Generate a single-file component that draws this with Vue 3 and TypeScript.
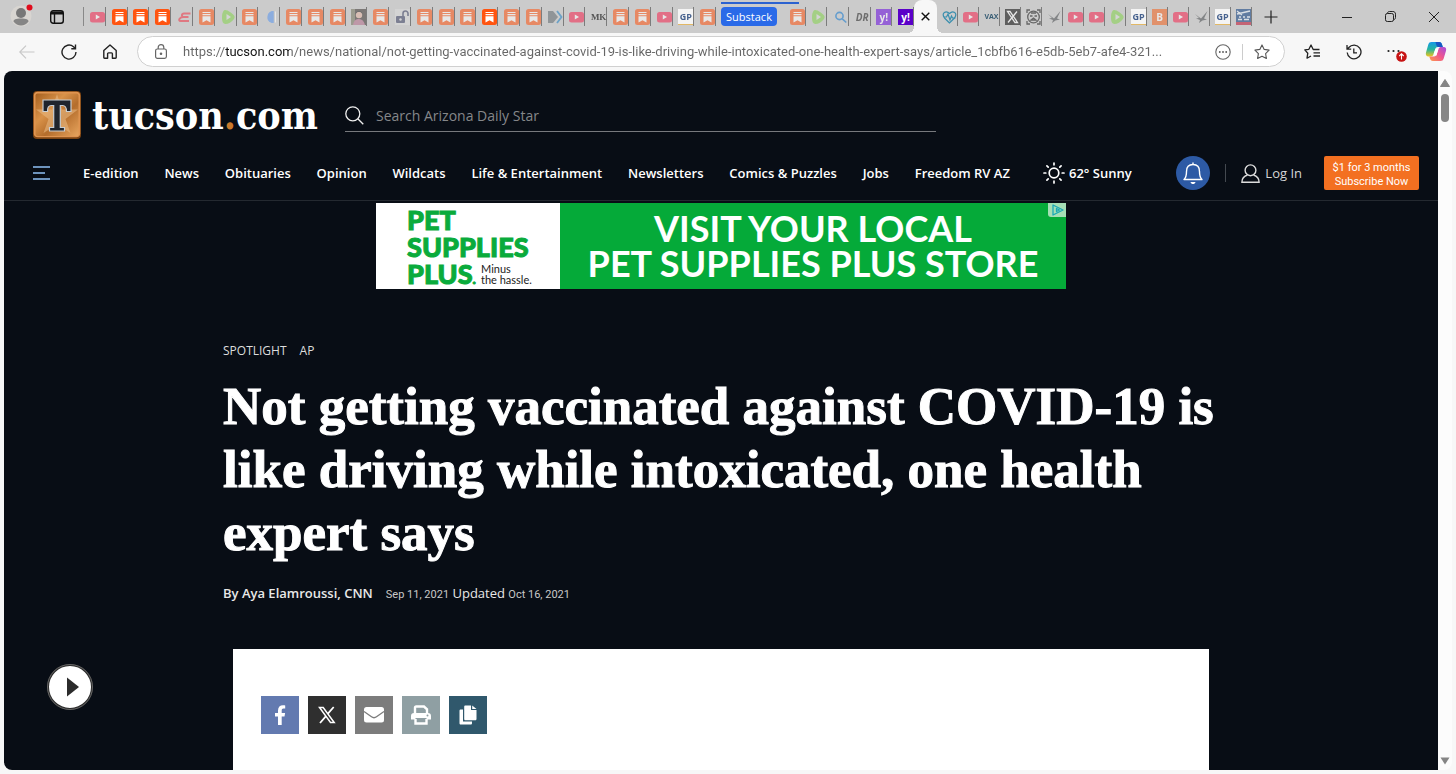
<script setup lang="ts">
import { ref } from 'vue'

interface Tab {
  icon: string
  bright?: boolean
}
interface Segment {
  type: 'group' | 'label' | 'active'
  name: string
  tabs: Tab[]
}

const toTabs = (list: string): Tab[] =>
  list.split(' ').map((item) => ({ icon: item.replace('!', ''), bright: item.endsWith('!') }))

const segments: Segment[] = [
  {
    type: 'group',
    name: 'first',
    tabs: toTabs(
      'play sub! sub! sub! e sub rumble sub moon sub sub sub photo sub lock sub sub sub sub! sub sub arrow play mk sub sub play gp sub',
    ),
  },
  { type: 'label', name: 'Substack', tabs: [] },
  { type: 'group', name: 'second', tabs: toTabs('sub rumble search dr yahoo yahoo!') },
  { type: 'active', name: 'active', tabs: [] },
  {
    type: 'group',
    name: 'third',
    tabs: toTabs('heart! play vax x face! bird play play rumble gp b play bird gp fox'),
  },
]

const glyphText: Record<string, string> = { mk: 'MK', gp: 'GP', dr: 'DR', yahoo: 'y!', vax: 'VAX', b: 'B' }

const address = ref(
  'https://tucson.com/news/national/not-getting-vaccinated-against-covid-19-is-like-driving-while-intoxicated-one-health-expert-says/article_1cbfb616-e5db-5eb7-afe4-321...',
)
const query = ref('')

const sections = [
  'E-edition',
  'News',
  'Obituaries',
  'Opinion',
  'Wildcats',
  'Life & Entertainment',
  'Newsletters',
  'Comics & Puzzles',
  'Jobs',
  'Freedom RV AZ',
]
</script>

<template>
  <div class="browser">
    <div class="tabbar">
      <button class="plain profile" aria-label="Profile">
        <svg width="24" height="24" viewBox="0 0 24 24">
          <circle cx="11" cy="13" r="10.5" fill="#d8d5d1" />
          <circle cx="11" cy="10" r="5" fill="#777" />
          <path d="M3.5 18.5c0-2 2-3 7.5-3s7.500 1 7.500 3c-2 2.600-4.500 4-7.500 4s-5.500-1.400-7.500-4z" fill="#858585" />
          <circle cx="19.500" cy="4.500" r="3" fill="#e00b1c" />
        </svg>
      </button>
      <button class="plain workspace" aria-label="Tab actions">
        <svg width="14" height="14" viewBox="0 0 14 14" fill="none" stroke="#111" stroke-width="1.4">
          <rect x="0.7" y="0.7" width="12.600" height="12.600" rx="2.500" />
          <path d="M1 2.200h12M1 3.800h12M4.500 4v9" />
        </svg>
      </button>
      <div class="strip">
        <template v-for="seg in segments" :key="seg.name">
          <div v-if="seg.type === 'group'" class="group" :class="seg.name">
            <button
              v-for="(tab, i) in seg.tabs"
              :key="i"
              class="plain tab"
              :class="{ bright: tab.bright }"
              :aria-label="`Tab ${i + 1}`"
            >
              <span v-if="glyphText[tab.icon]" class="glyph" :class="tab.icon">{{ glyphText[tab.icon] }}</span>
              <svg v-else width="15" height="16" viewBox="0 0 15 16" class="fav">
                <g v-if="tab.icon === 'sub'">
                  <rect width="15" height="16" rx="2.500" fill="#ff5410" />
                  <path d="M3.500 3.500h8M3.500 5.600h8" stroke="#fff" stroke-width="1.200" />
                  <path d="M3.500 7.200h8v6.300l-4-2.300-4 2.300z" fill="#fff" />
                </g>
                <g v-else-if="tab.icon === 'play'">
                  <rect y="3" width="15" height="10.500" rx="2.500" fill="#f5254f" />
                  <path d="M5.800 5.600v5l4.200-2.500z" fill="#fff" />
                </g>
                <g v-else-if="tab.icon === 'e'" fill="none" stroke="#f03545" stroke-width="2">
                  <path d="M13.500 4.500H7C4.500 4.500 4 7.800 7 8h4.500M8 8c-6-.5-7 4-4.500 4H12" />
                </g>
                <g v-else-if="tab.icon === 'rumble'">
                  <path d="M2 3c1-3 4-2 7 0s6 4 4 7-6 5-8.500 5S1 12 1 9s0-4 1-6z" fill="#85d44c" />
                  <path d="M5.500 5v6l4.500-3z" fill="#ddd" />
                </g>
                <g v-else-if="tab.icon === 'moon'">
                  <path d="M9.500 2v12a6 6 0 0 1 0-12z" fill="#5a96ee" />
                  <path d="M4 5c1.500-2 3-3 5.500-3v12C6 14 4 12 3.500 10z" fill="#5a96ee" />
                  <path d="M11.500 2.500v11" stroke="#fff" />
                </g>
                <g v-else-if="tab.icon === 'photo'">
                  <rect width="15" height="16" fill="#3c3532" />
                  <rect width="4" height="16" fill="#77775f" />
                  <circle cx="8" cy="6" r="3.200" fill="#e4b5a2" />
                  <path d="M2 16c1-5 3-6 6-6s5 2 6 6z" fill="#b56f8c" />
                  <path d="M4.500 5c0-4 7-4 7 0l-2-2h-3z" fill="#222" />
                </g>
                <g v-else-if="tab.icon === 'lock'">
                  <rect width="15" height="16" fill="#ddd" />
                  <rect x="1" y="7" width="9" height="7" rx="1" fill="#3d4265" />
                  <path d="M8 7V4.500a2.500 2.500 0 0 1 5 0V7" fill="none" stroke="#3d4265" stroke-width="1.600" />
                  <circle cx="5.500" cy="10.500" r="1.200" fill="#ddd" />
                </g>
                <g v-else-if="tab.icon === 'arrow'">
                  <path d="M0 2h5l5 6-5 6H0z" fill="#606a70" />
                  <path d="M9 2l4.500 6L9 14" fill="none" stroke="#1f80c4" stroke-width="1.800" />
                </g>
                <g v-else-if="tab.icon === 'search'" fill="none" stroke="#1278d0" stroke-width="1.600">
                  <circle cx="6.500" cy="7" r="3.600" />
                  <path d="M9.300 9.800l4 3.700" />
                </g>
                <g v-else-if="tab.icon === 'heart'" fill="none" stroke="#3b8fae" stroke-width="1.200">
                  <path d="M7.500 14L2.500 9C-1 4 4 .8 7.500 4.500 11 .8 16 4 12.500 9z" />
                  <path d="M2 8h2.500l1.500-3 2 6 1.500-4 1 2h3" />
                </g>
                <g v-else-if="tab.icon === 'x'">
                  <rect width="15" height="16" fill="#080808" />
                  <path d="M2.500 2.500h2.500l7.500 11H10zM12 2.500L3 13.500" fill="none" stroke="#fff" stroke-width="1.300" />
                </g>
                <g v-else-if="tab.icon === 'face'" fill="none" stroke="#666" stroke-width="1.300">
                  <path d="M1 4V1h3M11 1h3v3M1 12v3h3M11 15h3v-3" />
                  <circle cx="7.500" cy="8" r="5.800" />
                  <path d="M4 7h2.500M8.500 7H11M5 11l2.500-2 2.500 2zM5 4h5" />
                </g>
                <g v-else-if="tab.icon === 'bird'" fill="#4a4d50">
                  <path d="M1 5l6 4.500L13.500 2 10 9.500l3 1-4.500 1L5 14l1-3-4-1.500 3-.5z" />
                </g>
                <g v-else>
                  <rect width="15" height="16" fill="#0b3d80" />
                  <path d="M1 5l13-3M1 2l5 4M3 8h2M7 8h2M11 8h3M2 10.500h4M8 10.500h5" stroke="#e8f0fa" stroke-width="1.300" />
                  <rect y="13" width="15" height="3" fill="#c01030" />
                </g>
              </svg>
            </button>
          </div>
          <div v-else-if="seg.type === 'label'" class="labelwrap">
            <button class="plain grouplabel">{{ seg.name }}</button>
          </div>
          <div v-else class="active">
            <button class="plain close" aria-label="Close tab">
              <svg width="9" height="9" viewBox="0 0 9 9" stroke="#111" stroke-width="1.400">
                <path d="M.7.7l7.600 7.600M8.300.7L.7 8.300" />
              </svg>
            </button>
          </div>
        </template>
      </div>
      <button class="plain newtab" aria-label="New tab">
        <svg width="14" height="14" viewBox="0 0 14 14" stroke="#222" stroke-width="1.200"><path d="M7 .5v13M.5 7h13" /></svg>
      </button>
      <div class="windowctl">
        <button class="plain" aria-label="Minimize">
          <svg width="10" height="10" viewBox="0 0 10 10" stroke="#222"><path d="M0 5.500h10" /></svg>
        </button>
        <button class="plain" aria-label="Restore">
          <svg width="11" height="11" viewBox="0 0 11 11" fill="none" stroke="#222">
            <rect x=".5" y="2.500" width="8" height="8" rx="1.800" />
            <path d="M2.500 2.300C2.500 1 3.500.5 4.500.5h3.300c1.700 0 2.700 1 2.700 2.700v3.300c0 1-.5 2-1.800 2" />
          </svg>
        </button>
        <button class="plain" aria-label="Close window">
          <svg width="10" height="10" viewBox="0 0 10 10" stroke="#222"><path d="M0 0l10 10M10 0L0 10" /></svg>
        </button>
      </div>
    </div>

    <div class="toolbar">
      <div class="navbtns">
        <button class="plain" aria-label="Back">
          <svg width="16" height="14" viewBox="0 0 16 14" fill="none" stroke="#c8c8c8" stroke-width="1.200">
            <path d="M15.500 7H1M7 .7L.8 7 7 13.300" />
          </svg>
        </button>
        <button class="plain" aria-label="Refresh">
          <svg width="16" height="16" viewBox="0 0 16 16" fill="none" stroke="#222" stroke-width="1.400">
            <path d="M15 8A7 7 0 1 1 12.500 2.700L14.300 4.500M14.500.5v4.200h-4.200" />
          </svg>
        </button>
        <button class="plain" aria-label="Home">
          <svg width="14" height="15" viewBox="0 0 14 15" fill="none" stroke="#222" stroke-width="1.400" stroke-linejoin="round">
            <path d="M.8 6.400L7 .9l6.200 5.500v7.100c0 .4-.3.700-.7.700H9.400V9.800c0-.5-.4-.9-.9-.9h-3c-.5 0-.9.4-.9.900v4.400H1.500c-.4 0-.7-.3-.7-.7z" />
          </svg>
        </button>
      </div>
      <div class="omnibox">
        <svg class="padlock" width="12" height="15" viewBox="0 0 12 15" fill="none" stroke="#666" stroke-width="1.200">
          <rect x=".6" y="5" width="10.800" height="9.400" rx="1.800" />
          <path d="M3.200 5V3.400a2.800 2.800 0 0 1 5.600 0V5" />
          <circle cx="6" cy="9.700" r=".7" fill="#555" />
        </svg>
        <input v-model="address" class="url" aria-label="Address" type="text" spellcheck="false" />
        <button class="plain" aria-label="More site actions">
          <svg width="16" height="16" viewBox="0 0 16 16">
            <circle cx="8" cy="8" r="7.200" fill="none" stroke="#666" stroke-width="1.100" />
            <g fill="#555"><circle cx="4.800" cy="8" r=".9" /><circle cx="8" cy="8" r=".9" /><circle cx="11.200" cy="8" r=".9" /></g>
          </svg>
        </button>
        <span class="bar"></span>
        <button class="plain" aria-label="Add to favorites">
          <svg width="16" height="16" viewBox="0 0 16 16" fill="none" stroke="#555" stroke-width="1.100" stroke-linejoin="round">
            <path d="M8 .9l2.200 4.500 4.900.7-3.500 3.500.8 4.900L8 12.200l-4.400 2.300.8-4.900L.9 6.100l4.900-.7z" />
          </svg>
        </button>
      </div>
      <div class="tools">
        <button class="plain" aria-label="Favorites">
          <svg width="17" height="16" viewBox="0 0 17 16" fill="none" stroke="#222" stroke-width="1.300" stroke-linejoin="round">
            <path d="M15.500 5.500H9.200L7 1 4.900 5.300.8 5.900l3 3.300-.8 5L7 12M9.500 8.800H16M9.500 12H16" />
          </svg>
        </button>
        <button class="plain" aria-label="History">
          <svg width="16" height="16" viewBox="0 0 16 16" fill="none" stroke="#222" stroke-width="1.300">
            <path d="M1.200 8.500A6.900 6.900 0 1 0 2.800 3.500L1.200 5M1 1v4.200h4.200M7.800 4.500v4.300H11" />
          </svg>
        </button>
        <button class="plain menu" aria-label="Settings and more">
          <svg width="20" height="20" viewBox="0 0 20 20">
            <g fill="#222"><circle cx="1.500" cy="9" r="1.100" /><circle cx="6.500" cy="9" r="1.100" /><circle cx="11.500" cy="9" r="1.100" /></g>
            <circle cx="14.500" cy="14.500" r="5.300" fill="#c71414" />
            <path d="M14.500 17.500V12M12.300 14l2.200-2.200 2.200 2.200" fill="none" stroke="#fff" stroke-width="1.100" />
          </svg>
        </button>
        <button class="plain" aria-label="Copilot">
          <svg width="22" height="21" viewBox="0 0 22 21">
            <defs>
              <linearGradient id="cpa" x1="0" y1="0" x2="0" y2="1">
                <stop offset="0" stop-color="#1598e8" /><stop offset=".5" stop-color="#24b5a0" /><stop offset="1" stop-color="#f0c419" />
              </linearGradient>
              <linearGradient id="cpb" x1="1" y1="0" x2="0" y2="1">
                <stop offset="0" stop-color="#a34be0" /><stop offset=".5" stop-color="#f0568c" /><stop offset="1" stop-color="#ff9c48" />
              </linearGradient>
            </defs>
            <path d="M6.500 1h7.500c2 0 2.500 1 3 2.500l.8 2.500H13c-1.500 0-2.300.7-2.800 2.300L8.600 13c-.5 1.700-1.500 2.500-3 2.500H3.500C1.200 15.500.4 13.800 1 11.500l2.300-8C3.800 1.800 4.800 1 6.500 1z" fill="url(#cpa)" />
            <path d="M10.500 1H14c2 0 2.500 1 3 2.500l.8 2.500h-4.300c-1.500-.2-1.900-1-2.300-2.500z" fill="#1857c4" />
            <path d="M15.500 20H8c-2 0-2.500-1-3-2.500L4.200 15.500H9c1.500 0 2.300-.8 2.800-2.400L13.400 8.300C13.900 6.600 15 6 16.400 6h2.100c2.300 0 3.100 1.500 2.500 3.800l-2.300 7.700c-.5 1.700-1.500 2.500-3.200 2.500z" fill="url(#cpb)" />
            <path d="M13.300 8.500l-2 6.200L8.700 13l1.800-5.300z" fill="#fff" />
          </svg>
        </button>
      </div>
    </div>

    <div class="viewport">
      <div class="page">
        <header>
          <div class="masthead">
            <a href="#" class="logo">
              <svg width="48" height="48" viewBox="0 0 48 48">
                <defs>
                  <linearGradient id="copper" x1="0" y1="0" x2="1" y2="1">
                    <stop offset="0" stop-color="#a5601f" /><stop offset=".35" stop-color="#d99249" />
                    <stop offset=".6" stop-color="#b46d2c" /><stop offset="1" stop-color="#e7a45d" />
                  </linearGradient>
                </defs>
                <rect width="48" height="48" rx="4" fill="#7d4412" />
                <rect x=".8" y=".8" width="46.400" height="45.500" rx="4" fill="#e09450" />
                <rect x="2.500" y="2.500" width="43" height="42.500" rx="2" fill="url(#copper)" />
                <path d="M24 3l5 15.500h16L32.500 28l5 14L24 33.500 10.500 42l5-14L3 18.500h16z" fill="#e8b780" opacity=".6" />
                <path d="M10 9h28v11.500h-4.500c0-4-.8-6-4-6h-2.200V36.500h4.200v3.500h-15v-3.500h4.200V14.500h-2.200c-3.200 0-4 2-4 6H10z" fill="#20242c" stroke="#c8cdd2" stroke-width="1.200" />
              </svg>
              <span class="word">tucson<span class="dot">.</span>com</span>
            </a>
            <label class="search">
              <svg width="19" height="19" viewBox="0 0 19 19" fill="none" stroke="#eee" stroke-width="1.300">
                <circle cx="7.800" cy="7.800" r="7" /><path d="M12.800 12.800l5.500 5.500" />
              </svg>
              <input v-model="query" type="text" placeholder="Search Arizona Daily Star" aria-label="Search Arizona Daily Star" />
            </label>
          </div>
          <div class="navrow">
            <button class="plain burger" aria-label="Menu">
              <svg width="17" height="14" viewBox="0 0 17 14" stroke="#8fc0f5" stroke-width="1.400"><path d="M0 1h17M0 7h12M0 13h17" /></svg>
            </button>
            <nav>
              <a v-for="s in sections" :key="s" href="#">{{ s }}</a>
            </nav>
            <a href="#" class="weather">
              <svg width="22" height="22" viewBox="0 0 22 22" fill="none" stroke="#fff" stroke-width="1.700" stroke-linecap="round">
                <circle cx="11" cy="11" r="4.800" />
                <path d="M11 1v1.800M11 19.200V21M1 11h1.800M19.200 11H21M3.900 3.900l1.300 1.300M16.800 16.800l1.300 1.300M3.900 18.100l1.300-1.300M16.800 5.200l1.300-1.300" />
              </svg>
              <span>62° Sunny</span>
            </a>
            <div class="account">
              <button class="plain bell" aria-label="Notifications">
                <svg width="20" height="24" viewBox="0 0 20 24" fill="none" stroke="#fff" stroke-width="1.400" stroke-linejoin="round">
                  <path d="M1 18.500c2.300-2 2.500-4 2.500-8C3.500 6 6 3.500 10 3.500S16.500 6 16.500 10.500c0 4 .2 6 2.500 8zM10 3.500V1.500" />
                  <path d="M7.500 21h5c-.4 1.500-1.300 2-2.500 2s-2.100-.5-2.500-2z" fill="#fff" stroke="none" />
                </svg>
              </button>
              <span class="rule"></span>
              <a href="#" class="login">
                <svg width="19" height="19" viewBox="0 0 19 19" fill="none" stroke="#ddd" stroke-width="1.400">
                  <circle cx="9.500" cy="6.300" r="5.400" /><path d="M6.500 11C3.200 12 .9 14 .9 18.200h17.200c0-4.200-2.300-6.200-5.600-7.200" />
                </svg>
                <span>Log In</span>
              </a>
              <button class="plain subscribe">$1 for 3 months<br />Subscribe Now</button>
            </div>
          </div>
        </header>

        <a href="#" class="ad">
          <div class="brand">
            <div class="petlogo">
              <span>PET</span>
              <span>SUPPLIES</span>
              <span>PLUS<small>.</small></span>
            </div>
            <div class="tag">Minus<br />the hassle.</div>
          </div>
          <div class="pitch"><span>VISIT YOUR LOCAL</span><span>PET SUPPLIES PLUS STORE</span></div>
          <svg class="choices" width="18" height="14" viewBox="0 0 18 14">
            <path d="M0 0h18v14H3c-2 0-3-1-3-3z" fill="#a5dfb5" />
            <path d="M5 2v10l10-5zM8.500 5.500v3l3-1.500z" fill="none" stroke="#19a8b5" stroke-width="1.300" stroke-linejoin="round" />
          </svg>
        </a>

        <article>
          <div class="labels"><a href="#">SPOTLIGHT</a><a href="#">AP</a></div>
          <h1>Not getting vaccinated against COVID-19 is like driving while intoxicated, one health expert says</h1>
          <div class="byline">
            <strong>By Aya Elamroussi, CNN</strong>
            <span><small>Sep 11, 2021</small> Updated <small>Oct 16, 2021</small></span>
          </div>
          <div class="sheet">
            <button class="plain share fb" aria-label="Facebook">
              <svg width="20" height="20" viewBox="0 0 20 20" fill="#fff">
                <path d="M8 20v-8.500H5V8h3V5.500C8 2 10 .3 13 .3c1 0 1.800.1 2.200.2v3.100h-1.700c-1.400 0-1.800.8-1.800 1.900V8h3.400l-.6 3.500h-2.800V20z" />
              </svg>
            </button>
            <button class="plain share tw" aria-label="X">
              <svg width="20" height="20" viewBox="0 0 20 20" fill="none" stroke="#fff">
                <path d="M2.500 2.500h3.700l11 15h-3.700z" stroke-width="1.500" /><path d="M16.700 2l-6 6.800M9 11.200L3 18" stroke-width="1.800" />
              </svg>
            </button>
            <button class="plain share mail" aria-label="Email">
              <svg width="20" height="16" viewBox="0 0 20 16">
                <rect width="20" height="15.500" rx="2.500" fill="#fff" />
                <path d="M0 4.500l7.500 5.300c1.500 1.100 3.500 1.100 5 0L20 4.500" fill="none" stroke="#7c7c7c" stroke-width="1.300" />
              </svg>
            </button>
            <button class="plain share print" aria-label="Print">
              <svg width="20" height="20" viewBox="0 0 20 20">
                <path d="M4 8V2.800C4 1.900 4.600 1.500 5.300 1.500H13L16 4.300V8M4.500 14v4.500h11V14" fill="none" stroke="#fff" stroke-width="2.400" />
                <path d="M3 8h14c2 0 3 1 3 3v3.500h-4.500V13h-11v1.500H0V11c0-2 1-3 3-3z" fill="#fff" />
                <circle cx="16.500" cy="10.500" r="1" fill="#8f9fa3" />
              </svg>
            </button>
            <button class="plain share copy" aria-label="Copy article link">
              <svg width="18" height="20" viewBox="0 0 18 20" fill="#fff">
                <path d="M6.500.5H12V5h5.500v9c0 .8-.6 1.300-1.300 1.300H6.500c-.8 0-1.300-.5-1.300-1.300V1.800C5.200 1 5.700.5 6.500.5zM13.200.5l4.300 3.500h-4.300zM4 4.500v12h9v1.800c0 .8-.5 1.300-1.300 1.300H1.800c-.8 0-1.300-.5-1.300-1.300V5.800c0-.8.5-1.300 1.300-1.300z" />
              </svg>
            </button>
          </div>
        </article>
        <button class="plain playbtn" aria-label="Play">
          <svg width="12" height="20" viewBox="0 0 12 20"><path d="M0 .5v19L12 10z" fill="#2b2b2b" /></svg>
        </button>
      </div>
      <div class="scroll">
        <svg width="10" height="8" viewBox="0 0 10 8"><path d="M5 .5L9.500 7.500h-9z" fill="#858585" stroke="#858585" /></svg>
        <span class="thumb"></span>
        <svg width="10" height="8" viewBox="0 0 10 8"><path d="M5 7.500L.5.500h9z" fill="#858585" /></svg>
      </div>
    </div>
  </div>
</template>

<style>
body {
  margin: 0;
}
</style>

<style scoped>
.browser {
  height: 100vh;
  display: flex;
  flex-direction: column;
  overflow: hidden;
  background: #f7f7f7;
  font-family: 'Open Sans', 'Noto Sans', sans-serif;
}
.browser *,
.browser *::before,
.browser *::after {
  box-sizing: border-box;
}
a {
  color: inherit;
  text-decoration: none;
}
svg {
  display: block;
  flex: none;
}
.plain {
  border: 0;
  margin: 0;
  padding: 0;
  background: none;
  font: inherit;
  color: inherit;
  display: flex;
  align-items: center;
  justify-content: center;
  flex: none;
}
.tabbar {
  flex: none;
  height: 33px;
  background: #cbcbcb;
  display: flex;
  align-items: center;
}
.profile {
  margin-left: 10px;
  margin-bottom: 4px;
}
.workspace {
  margin-left: 16px;
}
.strip {
  margin-left: 19px;
  display: flex;
  align-self: stretch;
}
.group {
  display: flex;
  align-items: center;
}
.group.first {
  width: 633px;
}
.group.first .tab:first-child {
  border-left: 1px solid #888;
}
.group.second {
  width: 130px;
}
.group.third {
  width: 315px;
}
.tab {
  flex: 1;
  min-width: 0;
  height: 19px;
  border-right: 1px solid #7c7c7c;
  justify-content: flex-end;
}
.fav,
.glyph {
  opacity: 0.55;
}
.bright .fav,
.bright .glyph {
  opacity: 1;
}
.glyph {
  width: 15px;
  height: 16px;
  line-height: 16px;
  font-size: 10px;
  font-weight: 700;
  text-align: center;
  display: flex;
  justify-content: center;
}
.glyph.gp {
  background: #fff;
  color: #25477f;
  opacity: 0.8;
  font-size: 9px;
  border-bottom: 1px solid #e8b44c;
}
.glyph.mk {
  font-family: 'Liberation Serif', serif;
  font-size: 9px;
  color: #222;
  opacity: 0.7;
}
.glyph.dr {
  font-style: italic;
  color: #222;
}
.glyph.yahoo {
  background: #6a0be0;
  color: #fff;
}
.bright .glyph.yahoo {
  background: #5a00c8;
}
.glyph.vax {
  font-size: 7px;
  color: #14425f;
  opacity: 0.8;
}
.glyph.b {
  background: #f4621e;
  color: #fff;
}
.labelwrap {
  position: relative;
  width: 68px;
  padding: 7px 7px 7px 5px;
}
.labelwrap::before {
  content: '';
  position: absolute;
  top: 2px;
  left: 5px;
  width: 78px;
  height: 2px;
  background: #2b62d0;
}
.grouplabel {
  width: 56px;
  height: 19px;
  border-radius: 4px;
  background: #2a6ae8;
  color: #fff;
  font-size: 11px;
}
.active {
  position: relative;
  width: 23px;
  background: #f7f7f7;
  border-radius: 8px 8px 0 0;
  display: flex;
  justify-content: center;
}
.active::before,
.active::after {
  content: '';
  position: absolute;
  bottom: 0;
  width: 6px;
  height: 6px;
}
.active::before {
  right: 100%;
  background: radial-gradient(circle at 0 0, transparent 6px, #f7f7f7 6px);
}
.active::after {
  left: 100%;
  background: radial-gradient(circle at 100% 0, transparent 6px, #f7f7f7 6px);
}
.newtab {
  margin-left: 12px;
}
.windowctl {
  margin-left: auto;
  padding-right: 17px;
  display: flex;
  gap: 33px;
}
.toolbar {
  flex: none;
  height: 37px;
  display: flex;
  align-items: center;
}
.navbtns {
  display: flex;
  align-items: center;
  gap: 26px;
  padding: 0 19px;
  width: 137px;
}
.omnibox {
  flex: 1;
  height: 31px;
  border: 1px solid #d0d0d0;
  border-radius: 16px;
  background: #fff;
  display: flex;
  align-items: center;
  padding: 0 14px 0 17px;
}
.url {
  flex: 1;
  min-width: 0;
  border: 0;
  outline: 0;
  padding: 0;
  margin: 0 8px 0 16px;
  font: 13px Roboto, sans-serif;
  color: #666;
  background: linear-gradient(90deg, #666 42px, #111 42px, #111 107px, #666 107px);
  background-clip: text;
  -webkit-text-fill-color: transparent;
}
.bar {
  width: 1px;
  height: 16px;
  margin: 0 11px;
  background: #ccc;
}
.tools {
  display: flex;
  align-items: center;
  gap: 25px;
  padding: 0 9px 0 19px;
}
.menu {
  margin-right: -7px;
}
.viewport {
  flex: 1;
  min-height: 0;
  margin: 1px 4px 4px;
  display: flex;
  border-radius: 8px;
  overflow: hidden;
  background: #fcfcfc;
}
.page {
  flex: 1;
  position: relative;
  background: #080d15;
  color: #fff;
  overflow: hidden;
}
.scroll {
  width: 14px;
  padding: 8px 0 5px;
  display: flex;
  flex-direction: column;
  align-items: center;
}
.thumb {
  width: 8px;
  height: 28px;
  margin: 7px 0 auto;
  border-radius: 4px;
  background: #868686;
}
header {
  padding: 20px 19px 10px 29px;
  border-bottom: 1px solid #242930;
}
.masthead {
  display: flex;
  align-items: center;
  height: 48px;
}
.logo {
  width: 312px;
  display: flex;
  align-items: center;
  gap: 11px;
}
.word {
  font: bold 39px/48px 'DejaVu Serif Condensed', 'DejaVu Serif', serif;
}
.dot {
  color: #c9792c;
}
.search {
  width: 591px;
  height: 33px;
  padding-top: 1px;
  border-bottom: 1px solid #77797d;
  display: flex;
  align-items: center;
  gap: 12px;
}
.search input {
  flex: 1;
  min-width: 0;
  border: 0;
  outline: 0;
  padding: 0;
  background: none;
  color: #fff;
  font: 14px 'Open Sans', sans-serif;
}
.search input::placeholder {
  color: #85878a;
}
.navrow {
  margin-top: 17px;
  height: 34px;
  display: flex;
  align-items: center;
  font-size: 13px;
  font-weight: 600;
  white-space: nowrap;
}
.burger {
  margin-right: 33px;
}
nav {
  width: 927px;
  display: flex;
  justify-content: space-between;
}
.weather {
  margin-left: 33px;
  display: flex;
  align-items: center;
  gap: 4px;
}
.account {
  margin-left: auto;
  display: flex;
  align-items: center;
  font-weight: 400;
}
.bell {
  width: 34px;
  height: 34px;
  border-radius: 50%;
  background: #2d5aa5;
}
.rule {
  width: 1px;
  height: 18px;
  margin: 0 15px;
  background: #444950;
}
.login {
  display: flex;
  align-items: center;
  gap: 5px;
  margin-right: 22px;
  color: #d5d5d5;
}
.subscribe {
  width: 95px;
  height: 34px;
  padding-top: 4px;
  background: #f37021;
  border-radius: 2px;
  font-family: Roboto, sans-serif;
  font-size: 11px;
  line-height: 14px;
}
.ad {
  position: relative;
  display: flex;
  width: 690px;
  height: 86px;
  margin: 2px auto 0;
  font-family: Lato, sans-serif;
}
.brand {
  width: 184px;
  background: #fff;
  padding-left: 31px;
  display: flex;
  align-items: center;
}
.petlogo {
  width: 74px;
  display: flex;
  flex-direction: column;
  font-size: 27px;
  line-height: 27px;
  font-weight: 900;
  color: #0aab3c;
  -webkit-text-stroke: 1px #0aab3c;
}
.petlogo small {
  font-size: 14px;
  line-height: 14px;
}
.tag {
  align-self: flex-end;
  font-size: 11px;
  line-height: 11px;
  color: #222;
  white-space: nowrap;
  padding-bottom: 4px;
}
.pitch {
  flex: 1;
  background: #05aa39;
  display: flex;
  flex-direction: column;
  justify-content: center;
  text-align: center;
  font-size: 36px;
  line-height: 35px;
  font-weight: 700;
  white-space: nowrap;
}
.choices {
  position: absolute;
  top: 0;
  right: 0;
}
article {
  max-width: 996px;
  margin: 52px auto 0;
}
.labels {
  display: flex;
  gap: 13px;
  font-size: 12px;
  line-height: 20px;
  color: #ddd;
}
h1 {
  margin: 14px 0 0;
  font: bold 53px/63px 'Liberation Serif', serif;
  -webkit-text-stroke: 1px #fff;
}
.byline {
  margin-top: 19px;
  display: flex;
  gap: 13px;
  font-size: 13px;
  line-height: 20px;
  color: #e8e8e8;
}
.byline strong {
  font-weight: 600;
}
.byline small {
  font-family: Roboto, sans-serif;
  font-size: 11px;
  color: #c8c8c8;
}
.sheet {
  margin: 44px 10px 0;
  height: 300px;
  padding: 47px 28px;
  background: #fff;
  display: flex;
  align-items: flex-start;
  gap: 9px;
}
.share {
  width: 38px;
  height: 38px;
}
.fb {
  background: #637ab0;
}
.tw {
  background: #2f2f2f;
}
.mail {
  background: #7c7c7c;
}
.print {
  background: #8f9fa3;
}
.copy {
  background: #30586c;
}
.playbtn {
  position: absolute;
  left: 43px;
  bottom: 60px;
  width: 46px;
  height: 46px;
  padding-left: 5px;
  border-radius: 50%;
  background: #fff;
  border: 2px solid #2b2b2b;
  outline: 1px solid #666;
  outline-offset: -1px;
}
</style>
